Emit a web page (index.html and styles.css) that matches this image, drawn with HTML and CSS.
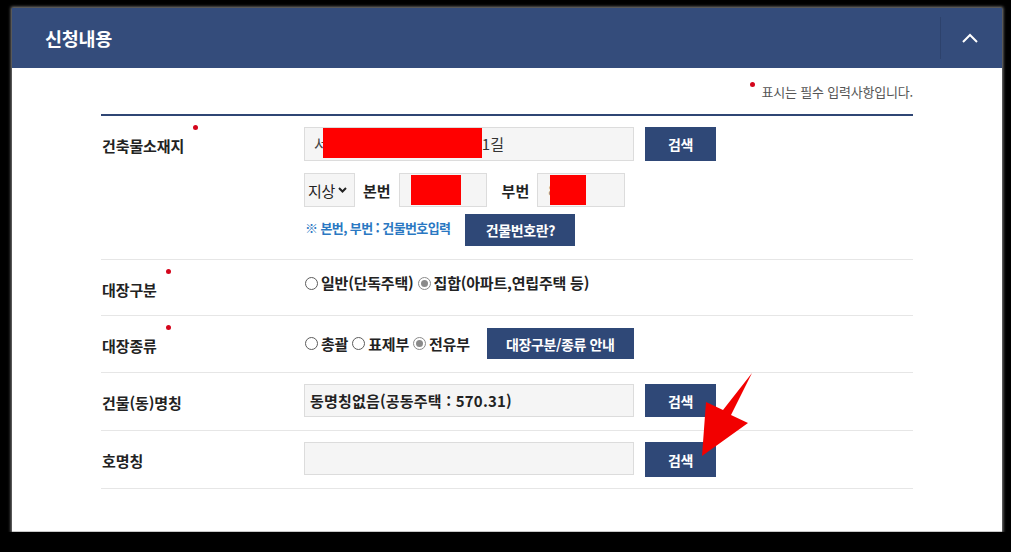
FILE: index.html
```html
<!DOCTYPE html>
<html lang="ko">
<head>
<meta charset="utf-8">
<title>신청내용</title>
<link rel="stylesheet" href="styles.css">
</head>
<body>
<div class="panel">
  <div class="panel-head">
    <h2 class="panel-title">신청내용</h2>
    <div class="toggle">
      <svg width="16" height="10" viewBox="0 0 16 10"><polyline points="1,9 8,2 15,9" fill="none" stroke="#fff" stroke-width="2"/></svg>
    </div>
  </div>
  <div class="panel-body">
    <p class="req-note"><span class="dot"></span>표시는 필수 입력사항입니다.</p>
    <div class="form">
      <div class="row">
        <div class="label">건축물소재지<span class="dot"></span></div>
        <div class="field field-addr">
          <div class="line">
            <div class="input wide"><span class="cut">서</span><span class="redact r1"></span><span>1길</span></div>
            <button class="btn search">검색</button>
          </div>
          <div class="line">
            <div class="select">지상<svg width="9" height="6" viewBox="0 0 9 6"><polyline points="1,1 4.5,4.5 8,1" fill="none" stroke="#222" stroke-width="2"/></svg></div>
            <span class="sub-label">본번</span>
            <div class="input short"><span class="redact r2"></span></div>
            <span class="sub-label sub2">부번</span>
            <div class="input short s2"><span class="ghost">8</span><span class="redact r3"></span></div>
          </div>
          <div class="line line-note">
            <span class="hint">※ 본번, 부번 : 건물번호입력</span>
            <button class="btn btn-num">건물번호란?</button>
          </div>
        </div>
      </div>
      <div class="row">
        <div class="label">대장구분<span class="dot"></span></div>
        <div class="field field-radio">
          <span class="radio"><span class="circle"></span>일반(단독주택)</span>
          <span class="radio"><span class="circle on"></span>집합(아파트,연립주택 등)</span>
        </div>
      </div>
      <div class="row">
        <div class="label">대장종류<span class="dot"></span></div>
        <div class="field field-kind">
          <span class="radio"><span class="circle"></span>총괄</span>
          <span class="radio"><span class="circle"></span>표제부</span>
          <span class="radio"><span class="circle on"></span>전유부</span>
          <button class="btn btn-guide">대장구분/종류 안내</button>
        </div>
      </div>
      <div class="row">
        <div class="label">건물(동)명칭</div>
        <div class="field field-one">
          <div class="input wide mid"><span class="bold-val">동명칭없음(공동주택 : 570.31)</span></div>
          <button class="btn search">검색</button>
        </div>
      </div>
      <div class="row">
        <div class="label">호명칭</div>
        <div class="field field-last">
          <div class="input wide mid"></div>
          <button class="btn search tall">검색</button>
        </div>
      </div>
    </div>
  </div>
</div>
<svg class="arrow" width="1011" height="552" viewBox="0 0 1011 552">
  <polygon points="752,373 731,415 748,423 702,456 706,402 723,410" fill="#f20000"/>
</svg>
</body>
</html>
```
FILE: styles.css
```css
* { box-sizing: border-box; }
body {
  margin: 0;
  background: #000;
  font-family: "Noto Sans CJK KR", "Noto Sans", sans-serif;
  color: #333;
}
.panel {
  position: relative;
  margin: 8px 0 0 12px;
  width: 990px;
  height: 524px;
  background: #fff;
  border-bottom: 1px solid #c8c8c8;
  box-shadow: 0 0 3px 1px rgba(190, 190, 190, 0.75);
}
.panel-head {
  height: 60px;
  background: #344c7b;
  display: flex;
  align-items: center;
  justify-content: space-between;
}
.panel-title {
  margin: 0;
  padding-left: 33px;
  color: #fff;
  font-size: 18.5px;
  font-weight: 700;
  line-height: 24px;
  letter-spacing: -0.3px;
}
.toggle {
  width: 62px;
  height: 42px;
  border-left: 1px solid rgba(0, 0, 0, 0.12);
  display: flex;
  align-items: center;
  justify-content: center;
  padding-right: 4px;
}
.toggle svg { display: block; }
.panel-body { padding: 0 89px; }
.dot {
  display: inline-block;
  width: 5px;
  height: 5px;
  border-radius: 50%;
  background: #d4061c;
  vertical-align: middle;
  position: relative;
}
.req-note {
  margin: 0;
  height: 46px;
  padding-top: 15px;
  text-align: right;
  font-size: 13px;
  line-height: 18px;
  color: #555;
  letter-spacing: -0.2px;
}
.req-note .dot { top: -9px; margin-right: 7px; }
.form { border-top: 2px solid #2f4674; }
.row {
  display: grid;
  grid-template-columns: 203px 1fr;
  border-bottom: 1px solid #e6e6e6;
}
.label {
  padding-top: 20px;
  padding-left: 1px;
  font-size: 15px;
  font-weight: 700;
  line-height: 20px;
  color: #222;
  letter-spacing: -0.1px;
}
.label .dot { top: -20px; margin-left: 9px; }
.field { display: flex; }
.field-addr { flex-direction: column; padding: 11px 0 13px; }
.line { display: flex; align-items: center; }
.line + .line { margin-top: 12px; }
.line.line-note { margin-top: 7px; }
.input {
  height: 34px;
  background: #f5f5f5;
  border: 1px solid #dcdcdc;
  display: flex;
  align-items: flex-start;
  padding: 0 0 0 9px;
  font-size: 15px;
  line-height: 32px;
  color: #333;
}
.input.wide { width: 330px; }
.input.mid { height: 33px; line-height: 31px; padding-left: 5px; }
.input.short { width: 88px; padding-left: 11px; }
.input.short.s2 { padding-left: 10px; }
.redact { display: block; background: #ff0000; height: 30px; }
.r1 { width: 159px; margin-left: -5px; }
.r2 { width: 50px; margin-top: 1px; }
.r3 { width: 36px; margin-top: 1px; margin-left: -7px; }
.cut { color: #444; }
.ghost { color: #888; }
.bold-val { font-weight: 700; color: #222; letter-spacing: 0.2px; }
.btn {
  border: 0;
  margin: 0;
  padding: 0;
  background: #2f4877;
  color: #fff;
  font-family: inherit;
  font-size: 14px;
  font-weight: 700;
  letter-spacing: -0.4px;
}
.search { width: 71px; height: 34px; margin-left: 11px; }
.search.tall { height: 35px; }
.select {
  width: 51px;
  height: 34px;
  background: #f5f5f5;
  border: 1px solid #dcdcdc;
  display: flex;
  align-items: center;
  padding-left: 3px;
  font-size: 15px;
  color: #222;
  gap: 3px;
  letter-spacing: -0.3px;
}
.sub-label {
  font-size: 15px;
  font-weight: 700;
  color: #222;
  margin: 0 8px 0 8px;
}
.sub-label.sub2 { margin: 0 8px 0 15px; }
.hint {
  font-size: 13px;
  font-weight: 700;
  color: #2a78c2;
  letter-spacing: -0.6px;
  padding-left: 1px;
  margin-top: -5px;
}
.btn-num { width: 110px; height: 32px; margin-left: 15px; }
.field-radio {
  padding: 13px 0 22px;
  align-items: center;
  line-height: 20px;
}
.radio {
  display: inline-flex;
  align-items: center;
  font-size: 15px;
  font-weight: 700;
  color: #222;
  line-height: 20px;
  margin-right: 3px;
  letter-spacing: -0.2px;
}
.circle {
  width: 13px;
  height: 13px;
  border: 1px solid #5c5c5c;
  border-radius: 50%;
  background: #fff;
  margin: 0 3px 0 1px;
  display: flex;
  align-items: center;
  justify-content: center;
}
.circle.on { border-color: #8a8a8a; }
.circle.on::after {
  content: "";
  width: 7px;
  height: 7px;
  border-radius: 50%;
  background: #8a8a8a;
}
.field-kind { padding: 12px 0 13px; align-items: center; }
.btn-guide { width: 147px; height: 31px; margin-left: 14px; }
.field-one { padding: 11px 0 13px; align-items: flex-start; }
.field-one .search { height: 33px; }
.field-last { padding: 11px 0 11px; align-items: flex-start; }
.arrow { position: absolute; left: 0; top: 0; pointer-events: none; }
```
